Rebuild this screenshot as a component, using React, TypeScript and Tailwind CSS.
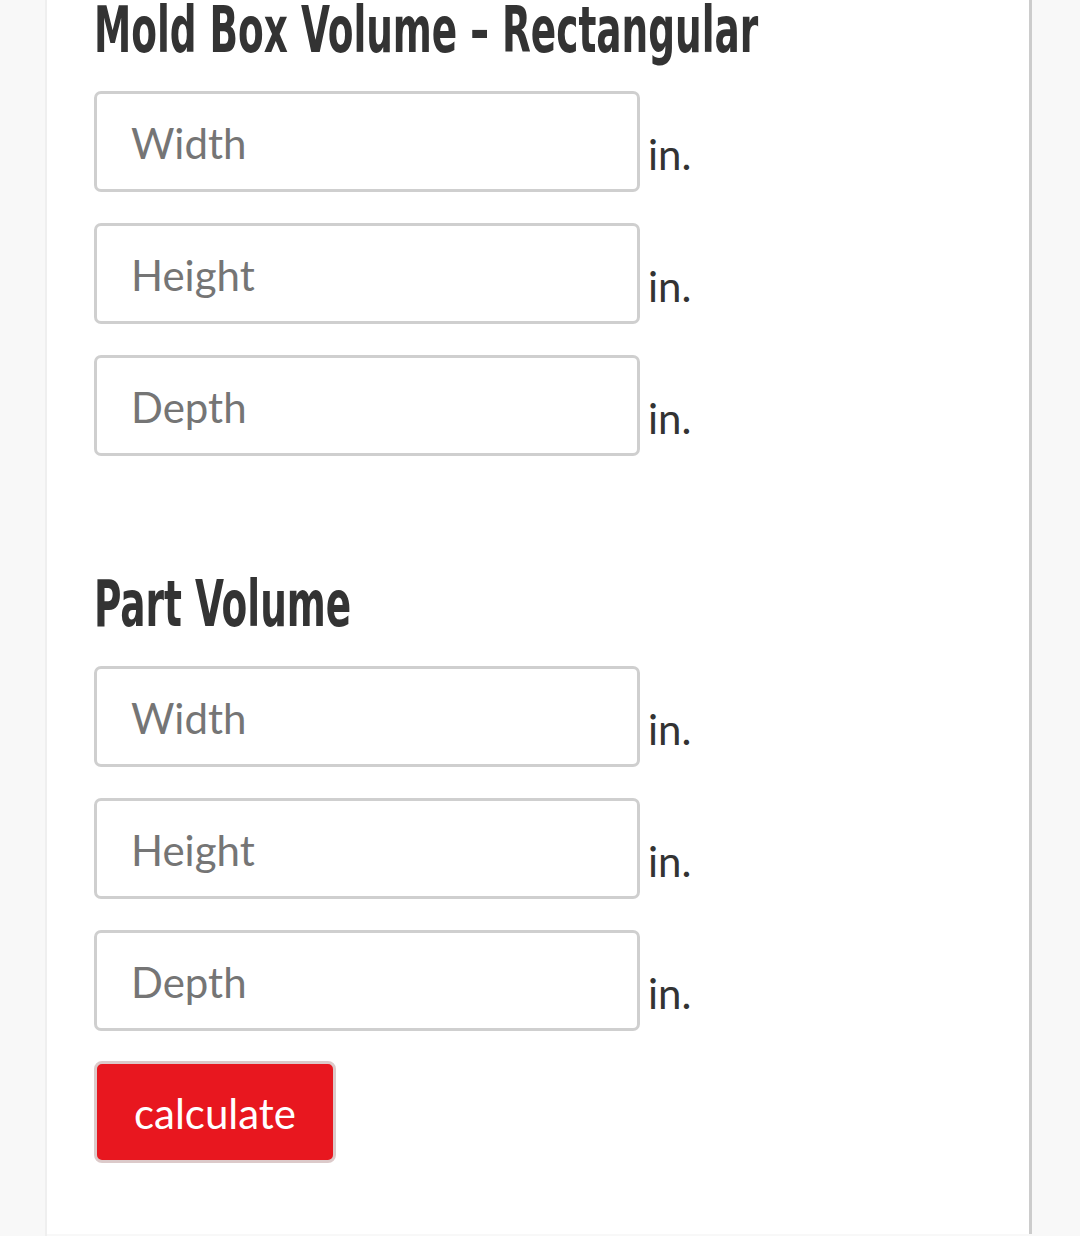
const fields = ["Width", "Height", "Depth"]

function DimRow({ label }: { label: string }) {
  return (
    <div className="flex items-end">
      <input
        type="text"
        placeholder={label}
        className="h-[101px] w-[546px] rounded-[7px] border-[3px] border-[#cfcfcf] bg-white pl-[34px] pt-[3px] text-[42px] text-[#333] outline-none placeholder:text-[#757575]"
      />
      <span className="mb-[17px] ml-[8px] text-[42px] leading-none text-[#333]">in.</span>
    </div>
  )
}

function Heading({ children }: { children: string }) {
  return (
    <h2 className="origin-left scale-x-[0.65] whitespace-nowrap font-['DejaVu_Sans_Condensed','DejaVu_Sans',sans-serif] text-[64px] font-bold leading-[60px] text-[#333]">
      {children}
    </h2>
  )
}

export default function App() {
  return (
    <div className="min-h-[1236px] w-[1080px] overflow-hidden bg-[#f8f8f8] font-['Lato','Open_Sans',sans-serif]">
      <div className="ml-[45px] min-h-[1236px] w-[987px] border-l-2 border-[#efefef]">
        <div className="mt-[2px] min-h-[1234px] w-[985px] border-r-[3px] border-[#cccccc] bg-white pl-[47px]">
          <div className="-mt-[2px]">
            <Heading>Mold Box Volume – Rectangular</Heading>
          </div>
          <div className="mt-[31px] flex flex-col gap-[31px]">
            {fields.map((f) => (
              <DimRow key={"a" + f} label={f} />
            ))}
          </div>

          <div className="mt-[118px]">
            <Heading>Part Volume</Heading>
          </div>
          <div className="mt-[32px] flex flex-col gap-[31px]">
            {fields.map((f) => (
              <DimRow key={"b" + f} label={f} />
            ))}
          </div>

          <button className="mt-[30px] h-[102px] w-[242px] rounded-[8px] border-[3px] border-[#dccaca] bg-[#e8171f] pt-[2px] text-[42px] text-white">
            calculate
          </button>
        </div>
      </div>
    </div>
  )
}
